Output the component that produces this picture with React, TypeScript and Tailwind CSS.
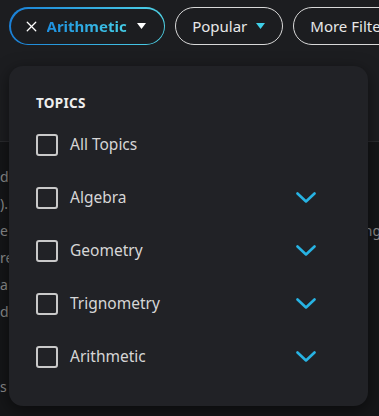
import { X } from "lucide-react";

const topics = ["Algebra", "Geometry", "Trignometry", "Arithmetic"];

const Caret = ({ className }: { className: string }) => (
  <svg width="9" height="6" viewBox="0 0 9 6" className={className}>
    <path d="M0 0h9L4.5 6z" fill="currentColor" />
  </svg>
);

const Chevron = () => (
  <svg width="20" height="12" viewBox="0 0 20 12" fill="none">
    <path
      d="M1.5 1.5L10 9.5L18.5 1.5"
      stroke="#27b3e3"
      strokeWidth="2.6"
      strokeLinecap="round"
      strokeLinejoin="round"
    />
  </svg>
);

const Checkbox = () => (
  <span className="w-[22px] h-[22px] shrink-0 rounded-[3px] border-2 border-[#c9c9c9]" />
);

export default function App() {
  return (
    <div
      className="relative w-[379px] h-[416px] overflow-hidden bg-[#151618] text-white"
      style={{ fontFamily: '"Noto Sans", "Open Sans", sans-serif' }}
    >
      {/* ── filter bar ── */}
      <div className="h-[142px] bg-[#1c1d20] border-b border-[#2a2b2e]">
        <div className="flex items-center gap-[10px] pl-[9px] pt-[7px] whitespace-nowrap">
          <div className="rounded-full p-[1.5px] bg-linear-to-r from-[#1a7fd6] to-[#4fd3e6]">
            <div className="h-[35px] rounded-full bg-[#1c1d20] flex items-center pl-[12px] pr-[18px]">
              <X size={17} strokeWidth={1.8} className="text-white" />
              <span className="ml-[7px] text-[15px] font-bold bg-linear-to-r from-[#1e8fe0] to-[#45cde6] bg-clip-text text-transparent">
                Arithmetic
              </span>
              <Caret className="ml-[10px] text-white" />
            </div>
          </div>
          <div className="h-[38px] rounded-full border-[1.5px] border-[#d8d8d8] flex items-center pl-[16px] pr-[17px]">
            <span className="text-[15px] text-[#e8e8e8]">Popular</span>
            <Caret className="ml-[9px] text-[#3fd0e8]" />
          </div>
          <div className="h-[38px] rounded-full border-[1.5px] border-[#d8d8d8] flex items-center pl-[16px] pr-[17px]">
            <span className="text-[15px] text-[#e8e8e8]">More Filters</span>
          </div>
        </div>
      </div>

      {/* ── page text behind the menu ── */}
      <div className="pt-[21px] text-[14px] leading-[27px] text-[#8c8c8c] whitespace-nowrap">
        <div>d</div>
        <div>).</div>
        <div className="flex justify-between"><span>e</span><span className="mr-[-2px]">ng</span></div>
        <div>re</div>
        <div>a :</div>
        <div>de</div>
        <div className="mt-[48px]">s</div>
      </div>

      {/* ── topics dropdown ── */}
      <div className="absolute left-[9px] top-[66px] w-[359px] h-[340px] rounded-[14px] bg-[#212226] shadow-[0_4px_16px_rgba(0,0,0,0.5)] pl-[27px] pr-[52px] pt-[28px]">
        <div className="text-[13.5px] leading-[18px] font-bold tracking-[0.3px] text-[#eeeeee]">TOPICS</div>
        <div className="mt-[20px] flex items-center h-[26px]">
          <Checkbox />
          <span className="ml-[12px] text-[15.5px] text-[#d6d6d6]">All Topics</span>
        </div>
        {topics.map((t) => (
          <div key={t} className="mt-[27px] flex items-center h-[26px]">
            <Checkbox />
            <span className="ml-[12px] text-[15.5px] text-[#d6d6d6] flex-1">{t}</span>
            <Chevron />
          </div>
        ))}
      </div>
    </div>
  );
}
